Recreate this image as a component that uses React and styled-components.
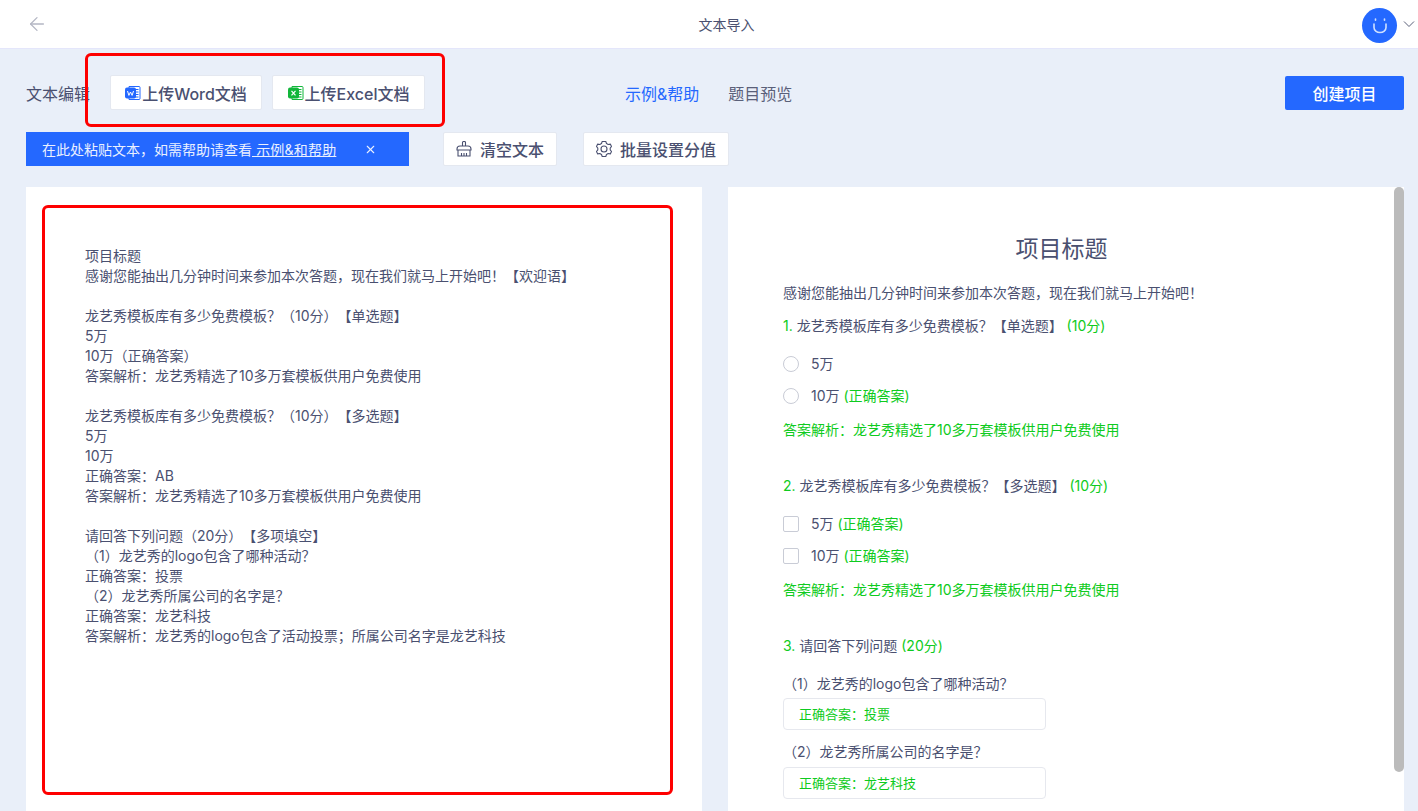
import React from 'react'
import styled, { createGlobalStyle } from 'styled-components'
import { ArrowLeft, X } from 'lucide-react'

const GlobalStyle = createGlobalStyle`
  html, body {
    margin: 0;
    height: 100%;
    overflow: hidden;
    background: #e9eff9;
    font-family: "Inter", "Noto Sans CJK SC", sans-serif;
    color: #4a5070;
    text-spacing-trim: space-all;
  }
  #root { height: 100%; }
  * { box-sizing: border-box; }
`

const Page = styled.div`
  position: relative;
  height: 811px;
  display: flex;
  flex-direction: column;
  overflow: hidden;
`
const Header = styled.header`
  height: 49px;
  flex: none;
  background: #fff;
  border-bottom: 1px solid #e4e6fb;
  display: grid;
  grid-template-columns: 1fr auto 1fr;
  align-items: center;
  padding: 0 3px 0 26px;
`
const BackIcon = styled(ArrowLeft)`
  color: #b4b7c4;
  display: block;
`
const HeaderTitle = styled.div`
  font-size: 14px;
  line-height: 20px;
  margin-top: 1px;
  margin-left: 12px;
`
const UserArea = styled.div`
  display: flex;
  align-items: center;
  justify-content: flex-end;
  gap: 6px;
`
const Avatar = styled.div`
  width: 35px;
  height: 35px;
  margin-top: 2px;
  border-radius: 50%;
  background: #2468ff;
  display: flex;
  align-items: center;
  justify-content: center;
`
const Main = styled.main`
  flex: 1;
  min-height: 0;
  padding: 26px 14px 0 26px;
  display: flex;
  flex-direction: column;
`
const TopRow = styled.div`
  height: 35px;
  display: flex;
  align-items: center;
`
const Label = styled.span`
  font-size: 16px;
  width: 84px;
  flex: none;
`
const PlainButton = styled.button`
  height: ${p => p.$h || 35}px;
  width: ${p => p.$w}px;
  margin-left: ${p => p.$ml || 0}px;
  flex: none;
  background: #fff;
  border: 1px solid #e4e8f0;
  border-radius: 2px;
  padding: 0;
  display: flex;
  align-items: center;
  justify-content: center;
  gap: ${p => p.$gap || 0}px;
  font-family: inherit;
  font-size: 16px;
  font-weight: 500;
  color: #4a5070;
`
const Tabs = styled.div`
  margin-left: 200px;
  display: flex;
  gap: 29px;
  flex: 1;
`
const Tab = styled.span`
  font-size: 16px;
  color: ${p => (p.$active ? '#2468ff' : '#5a6079')};
`
const CreateButton = styled.button`
  width: 119px;
  height: 34px;
  background: #2468ff;
  color: #fff;
  border: none;
  border-radius: 2px;
  font-family: inherit;
  font-size: 16px;
  font-weight: 500;
`
const SecondRow = styled.div`
  margin-top: 22px;
  height: 34px;
  display: flex;
  align-items: center;
`
const Notice = styled.div`
  width: 383px;
  height: 34px;
  background: #2468ff;
  color: #eaf0ff;
  font-size: 14px;
  display: flex;
  align-items: center;
  padding-left: 16px;
  flex: none;
`
const NoticeLink = styled.span`
  text-decoration: underline;
  white-space: pre;
  letter-spacing: 0.2px;
`
const NoticeClose = styled(X)`
  margin-left: 28px;
  color: #eaf0ff;
`
const Panels = styled.div`
  margin-top: 21px;
  flex: 1;
  min-height: 0;
  display: flex;
  gap: 26px;
`
const LeftPanel = styled.section`
  position: relative;
  width: 676px;
  flex: none;
  background: #fff;
  padding: 59px 59px 0;
  font-size: 14px;
  line-height: 20px;
  white-space: pre-line;
`
const RightPanel = styled.section`
  position: relative;
  flex: 1;
  background: #fff;
  padding: 47px 55px 0;
  font-size: 14px;
  line-height: 20px;
  overflow: hidden;
`
const ScrollThumb = styled.div`
  position: absolute;
  right: 0;
  top: 0;
  width: 10px;
  height: 585px;
  background: #bbbbbb;
  border-radius: 5px;
`
const Annotation = styled.div`
  position: absolute;
  border: 3px solid #fe0000;
  border-radius: 6px;
  pointer-events: none;
`
const ButtonsMark = styled(Annotation)`
  left: 85px;
  top: 53px;
  width: 360px;
  height: 74px;
`
const EditorMark = styled(Annotation)`
  left: 16px;
  top: 18px;
  width: 631px;
  height: 590px;
`
const Title = styled.h1`
  margin: 0;
  font-size: 23px;
  font-weight: 400;
  line-height: 30px;
  text-align: center;
  padding-right: 9px;
`
const Line = styled.div`
  margin-top: ${p => p.$mt || 0}px;
  color: ${p => (p.$green ? '#0ecb20' : 'inherit')};
  display: ${p => (p.$option ? 'flex' : 'block')};
  align-items: center;
  white-space: pre;
`
const Green = styled.span`
  color: #0ecb20;
`
const Mark = styled.span`
  width: 16px;
  height: 16px;
  flex: none;
  margin-right: 12px;
  background: #fff;
  border: 1px solid #c9ccd6;
  border-radius: ${p => (p.$round ? '50%' : '2px')};
`
const AnswerBox = styled.div`
  margin-top: ${p => p.$mt || 4}px;
  width: 263px;
  height: 32px;
  border: 1px solid #e6e8ee;
  border-radius: 4px;
  padding-left: 15px;
  display: flex;
  align-items: center;
  font-size: 13px;
  color: #0ecb20;
`

const FileIcon = ({ color, letter }) => (
  <svg width="16" height="16" viewBox="0 0 16 16" fill="none">
    <path d="M4 1.500h10a1 1 0 0 1 1 1v11a1 1 0 0 1-1 1H4z" fill="#fff" stroke={color} />
    <path d="M10 4.500h3.500M10 7h3.500M10 9.500h3.500M10 12h3.500" stroke={color} />
    <rect x="0" y="2.500" width="11" height="11" rx="2" fill={color} />
    {letter === 'W'
      ? <path d="M2.500 6l1.400 4.400L5.500 7l1.600 3.400L8.500 6" stroke="#fff" strokeWidth="1" />
      : <path d="M3.500 5.800l4 4.600M7.500 5.800l-4 4.600" stroke="#fff" strokeWidth="1.200" />}
  </svg>
)

const BasketIcon = () => (
  <svg width="16" height="16" viewBox="0 0 16 16" fill="none" stroke="#4a5070" strokeWidth="1.100">
    <path d="M6.500 5V1.500a1 1 0 0 1 1-1h1a1 1 0 0 1 1 1V5" />
    <path d="M1 9V8a3 3 0 0 1 3-3h8a3 3 0 0 1 3 3v1z" />
    <path d="M2 9v6h12V9M5.500 12v3M8 12v3M10.500 12v3" />
  </svg>
)

const GearIcon = () => (
  <svg width="16" height="18" viewBox="0 0 16 18" fill="none" stroke="#4a5070" strokeWidth="1.100" strokeLinejoin="round">
    <path d="M6.200 1.500h3.600l.7 2 1.700 1 2.100-.4 1.200 2.400-1.300 1.600v1.800l1.300 1.600-1.200 2.400-2.100-.4-1.700 1-.7 2H6.200l-.7-2-1.700-1-2.100.4L.5 11.500l1.300-1.600V8.100L.5 6.500l1.200-2.400 2.100.4 1.700-1z" />
    <circle cx="8" cy="9" r="3" />
  </svg>
)

const SmileIcon = () => (
  <svg width="20" height="20" viewBox="0 0 20 20" fill="none" stroke="#cfe0ff" strokeWidth="1.600" strokeLinecap="round">
    <path d="M4 9v3.500a6 5 0 0 0 12 0V9" />
    <path d="M5.500 4v1.200M14.500 4v1.200" />
  </svg>
)

const CaretIcon = () => (
  <svg width="12" height="8" viewBox="0 0 12 8" fill="none" stroke="#5a6079">
    <path d="M1 1.500l5 5 5-5" />
  </svg>
)

const source = `项目标题
感谢您能抽出几分钟时间来参加本次答题，现在我们就马上开始吧！【欢迎语】
\u00a0
龙艺秀模板库有多少免费模板？（10分）【单选题】
5万
10万（正确答案）
答案解析：龙艺秀精选了10多万套模板供用户免费使用
\u00a0
龙艺秀模板库有多少免费模板？（10分）【多选题】
5万
10万
正确答案：AB
答案解析：龙艺秀精选了10多万套模板供用户免费使用
\u00a0
请回答下列问题（20分）【多项填空】
（1）龙艺秀的logo包含了哪种活动？
正确答案：投票
（2）龙艺秀所属公司的名字是？
正确答案：龙艺科技
答案解析：龙艺秀的logo包含了活动投票；所属公司名字是龙艺科技`

export default function App() {
  return (
    <Page lang="zh-CN">
      <GlobalStyle />
      <Header>
        <BackIcon size={22} strokeWidth={1.4} />
        <HeaderTitle>文本导入</HeaderTitle>
        <UserArea>
          <Avatar><SmileIcon /></Avatar>
          <CaretIcon />
        </UserArea>
      </Header>
      <Main>
        <TopRow>
          <Label>文本编辑</Label>
          <PlainButton $w={152} $gap={1}><FileIcon color="#2468ff" letter="W" />上传Word文档</PlainButton>
          <PlainButton $w={153} $ml={10} $gap={1}><FileIcon color="#12b63a" letter="X" />上传Excel文档</PlainButton>
          <Tabs>
            <Tab $active>示例&帮助</Tab>
            <Tab>题目预览</Tab>
          </Tabs>
          <CreateButton>创建项目</CreateButton>
        </TopRow>
        <SecondRow>
          <Notice>
            在此处粘贴文本，如需帮助请查看<NoticeLink> 示例&和帮助</NoticeLink>
            <NoticeClose size={13} />
          </Notice>
          <PlainButton $w={114} $h={34} $ml={34} $gap={8}><BasketIcon />清空文本</PlainButton>
          <PlainButton $w={146} $h={34} $ml={26} $gap={8}><GearIcon />批量设置分值</PlainButton>
        </SecondRow>
        <Panels>
          <LeftPanel>
            {source}
            <EditorMark />
          </LeftPanel>
          <RightPanel>
            <Title>项目标题</Title>
            <Line $mt={19}>感谢您能抽出几分钟时间来参加本次答题，现在我们就马上开始吧！</Line>
            <Line $mt={13}><Green>1.</Green> 龙艺秀模板库有多少免费模板？【单选题】<Green> (10分)</Green></Line>
            <Line $mt={18} $option><Mark $round />5万</Line>
            <Line $mt={12} $option><Mark $round />10万<Green> (正确答案)</Green></Line>
            <Line $mt={14} $green>答案解析：龙艺秀精选了10多万套模板供用户免费使用</Line>
            <Line $mt={36}><Green>2.</Green> 龙艺秀模板库有多少免费模板？【多选题】<Green> (10分)</Green></Line>
            <Line $mt={18} $option><Mark />5万<Green> (正确答案)</Green></Line>
            <Line $mt={12} $option><Mark />10万<Green> (正确答案)</Green></Line>
            <Line $mt={14} $green>答案解析：龙艺秀精选了10多万套模板供用户免费使用</Line>
            <Line $mt={36}><Green>3.</Green> 请回答下列问题 <Green>(20分)</Green></Line>
            <Line $mt={18}>（1）龙艺秀的logo包含了哪种活动？</Line>
            <AnswerBox>正确答案：投票</AnswerBox>
            <Line $mt={12}>（2）龙艺秀所属公司的名字是？</Line>
            <AnswerBox $mt={5}>正确答案：龙艺科技</AnswerBox>
            <ScrollThumb />
          </RightPanel>
        </Panels>
      </Main>
      <ButtonsMark />
    </Page>
  )
}
